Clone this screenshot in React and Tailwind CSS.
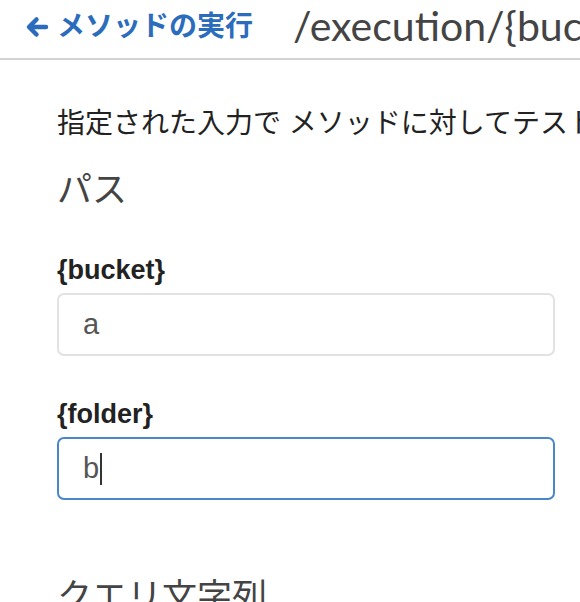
import { useState } from 'react'

const jp = "font-['Helvetica_Neue','Liberation_Sans','Noto_Sans_CJK_JP',sans-serif]"

function BackArrow() {
  return (
    <svg width="24" height="22" viewBox="0 0 24 22" className="shrink-0">
      <path
        d="M21 11H5M11.5 3.5L4 11l7.5 7.5"
        fill="none"
        stroke="currentColor"
        strokeWidth="4.5"
        strokeLinecap="round"
        strokeLinejoin="round"
      />
    </svg>
  )
}

function Field({ label, value, focused }) {
  const [val, setVal] = useState(value)
  return (
    <div>
      <label className="block text-[27px] font-bold text-[#222] leading-[34px]">{label}</label>
      {focused ? (
        <div className="mt-[6px] h-[63px] w-[498px] rounded-[7px] border-2 border-[#4a87c8] flex items-center pl-[24px] text-[29px] text-[#555] font-['Liberation_Sans',sans-serif]">
          <span>{val}</span>
          <span className="ml-[1px] w-[1.5px] h-[32px] bg-[#333]" />
        </div>
      ) : (
        <div className="mt-[6px] h-[63px] w-[498px] rounded-[7px] border-2 border-[#e2e2e2] flex items-center pl-[24px]">
          <input
            className="w-full outline-none bg-transparent text-[29px] text-[#555] font-['Liberation_Sans',sans-serif]"
            value={val}
            onChange={(e) => setVal(e.target.value)}
          />
        </div>
      )}
    </div>
  )
}

export default function App() {
  return (
    <div className={`w-[580px] h-[602px] overflow-hidden bg-white ${jp}`}>
      {/* header */}
      <div className="h-[60px] border-b-2 border-[#d2d2d2] flex items-center whitespace-nowrap overflow-hidden">
        <a className="ml-[25px] flex items-center gap-[8px] text-[#2c6cbc] font-bold text-[28px] mt-[-4px]">
          <BackArrow />
          <span>メソッドの実行</span>
        </a>
        <h1 className="ml-[40px] mt-[-6px] font-['Lato',sans-serif] text-[41px] text-[#444]">
          /execution/{'{'}bucket{'}'}/{'{'}folder{'}'}
        </h1>
      </div>

      <div className="pl-[57px]">
        <p className="mt-[47px] text-[28px] text-[#222] whitespace-nowrap leading-[34px]">
          指定された入力で メソッドに対してテストを実行します
        </p>
        <h2 className="mt-[29px] text-[35px] text-[#444] leading-[40px]">パス</h2>

        <div className="mt-[43px]">
          <Field label="{bucket}" value="a" />
        </div>
        <div className="mt-[41px]">
          <Field label="{folder}" value="b" focused />
        </div>

        <h2 className="mt-[77px] text-[35px] text-[#444] leading-[40px]">クエリ文字列</h2>
      </div>
    </div>
  )
}
